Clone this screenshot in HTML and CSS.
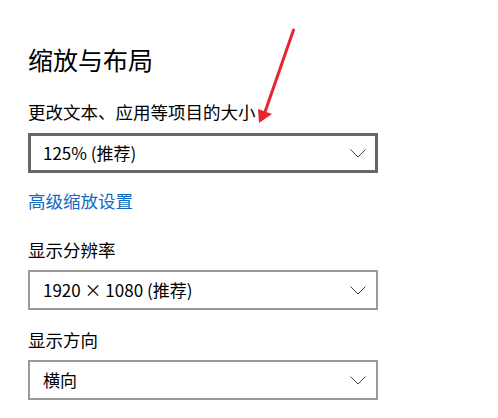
FILE: index.html
```html
<!DOCTYPE html>
<html lang="zh-CN">
<head>
<meta charset="utf-8">
<link rel="stylesheet" href="styles.css">
</head>
<body>
<main class="page">
  <h1 class="title">缩放与布局</h1>
  <div class="label label-scale">更改文本、应用等项目的大小</div>
  <div class="select select-active">
    <span class="select-text">125% (推荐)</span>
    <svg class="chevron" width="16" height="9" viewBox="0 0 16 9"><path d="M0.5 0.5 L8 8 L15.5 0.5" fill="none" stroke="#444" stroke-width="1"/></svg>
  </div>
  <a class="link" href="#">高级缩放设置</a>
  <div class="label label-res">显示分辨率</div>
  <div class="select">
    <span class="select-text">1920 × 1080 (推荐)</span>
    <svg class="chevron" width="16" height="9" viewBox="0 0 16 9"><path d="M0.5 0.5 L8 8 L15.5 0.5" fill="none" stroke="#444" stroke-width="1"/></svg>
  </div>
  <div class="label label-orient">显示方向</div>
  <div class="select">
    <span class="select-text">横向</span>
    <svg class="chevron" width="16" height="9" viewBox="0 0 16 9"><path d="M0.5 0.5 L8 8 L15.5 0.5" fill="none" stroke="#444" stroke-width="1"/></svg>
  </div>
</main>
<svg class="annotation" width="498" height="418" viewBox="0 0 498 418">
  <line x1="293.5" y1="30" x2="265" y2="112" stroke="#e8242c" stroke-width="3" stroke-linecap="round"/>
  <polygon points="258,109 272,114 259,123" fill="#e8242c"/>
</svg>
</body>
</html>
```
FILE: styles.css
```css
html, body {
  margin: 0;
  padding: 0;
  background: #fff;
}
body {
  width: 498px;
  height: 418px;
  overflow: hidden;
  position: relative;
  font-family: "Noto Sans CJK SC", "Noto Sans", sans-serif;
  color: #000;
}
.page {
  padding: 42px 0 0 28px;
  display: flex;
  flex-direction: column;
  align-items: flex-start;
}
.title {
  margin: 0;
  font-size: 25px;
  font-weight: 400;
  line-height: 34px;
}
.label {
  font-size: 17.5px;
  line-height: 24px;
}
.label-scale { margin-top: 24px; }
.label-res { margin-top: 25px; }
.label-orient { margin-top: 18px; }
.select {
  box-sizing: border-box;
  width: 350px;
  height: 40px;
  margin-top: 8px;
  border: 2px solid #999;
  display: flex;
  align-items: center;
  justify-content: space-between;
  padding: 0 10px 0 13px;
  font-size: 17px;
}
.select-active {
  margin-top: 9px;
  border: 3px solid #666;
  padding: 0 9px 0 12px;
}
.select-text {
  line-height: 24px;
}
.chevron {
  display: block;
}
.link {
  margin-top: 16px;
  font-size: 17.5px;
  line-height: 24px;
  color: #0f6cc4;
  text-decoration: none;
}
.annotation {
  position: absolute;
  left: 0;
  top: 0;
  pointer-events: none;
}
```
